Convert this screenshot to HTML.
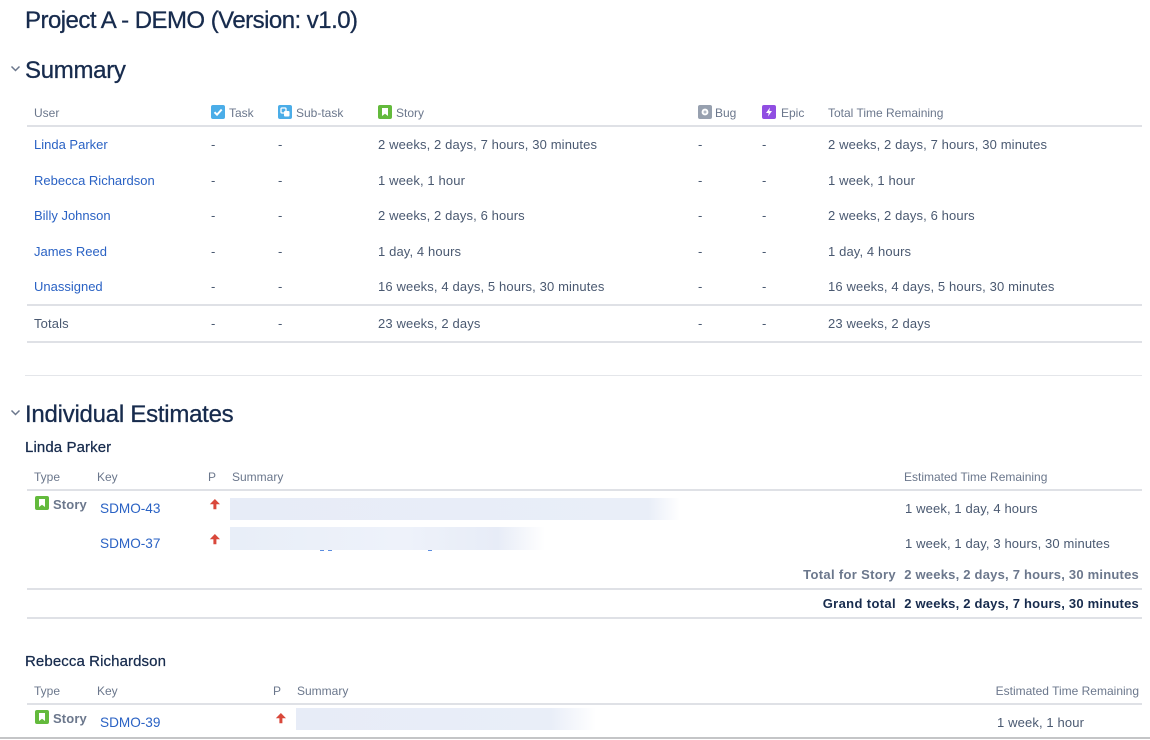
<!DOCTYPE html>
<html><head><meta charset="utf-8"><style>
html,body{margin:0;padding:0;background:#fff;width:1150px;height:740px;overflow:hidden}
body{position:relative;font-family:"Liberation Sans",sans-serif;font-size:13px;color:#4a5971}
.t{position:absolute;white-space:nowrap;line-height:16px;height:16px;letter-spacing:.125px}
.h{color:#6b778c;font-size:12px;font-weight:400;letter-spacing:0}
.a{color:#2a62c4;letter-spacing:0}
.k{color:#2a62c4;letter-spacing:0;font-size:13.6px}
.b{font-weight:700;letter-spacing:.22px}
.l{position:absolute;background:#dfe1e6}
svg{position:absolute}
.sum{position:absolute;height:22px;background:linear-gradient(90deg,#e7ecf7 0,#e9eef8 93%,#fff 100%)}
h1,h2,h3{position:absolute;margin:0;white-space:nowrap;color:#172b4d;font-weight:400;-webkit-text-stroke:.3px #172b4d}
h3{-webkit-text-stroke:.25px #172b4d;letter-spacing:.1px}
.f{position:absolute;top:550px;width:4px;height:1px;background:#5b8de0}
</style></head><body>
<h1 style="left:25px;top:7px;font-size:24px;line-height:28px;letter-spacing:-.53px">Project A - DEMO (Version: v1.0)</h1>
<svg style="left:10px;top:64px" width="12" height="10"><path d="M1.5 2.5 5.5 6.5 9.5 2.5" fill="none" stroke="#6b778c" stroke-width="1.5"/></svg>
<h2 style="left:25px;top:57px;font-size:24px;line-height:28px;letter-spacing:-.3px">Summary</h2>

<span class="t h" style="left:34px;top:105px">User</span>
<svg style="left:211px;top:105px" width="14" height="14"><rect width="14" height="14" rx="2" fill="#4bade8"/><path d="M3.5 7.2 6 9.7 10.7 4.5" fill="none" stroke="#fff" stroke-width="2"/></svg>
<span class="t h" style="left:229px;top:105px">Task</span>
<svg style="left:278px;top:105px" width="14" height="14"><rect width="14" height="14" rx="2" fill="#4bade8"/><rect x="3" y="3" width="5" height="5" rx="1" fill="none" stroke="#fff" stroke-width="1.3"/><rect x="6" y="6" width="5.5" height="5.5" rx="1" fill="#fff"/></svg>
<span class="t h" style="left:296px;top:105px">Sub-task</span>
<svg style="left:378px;top:105px" width="14" height="14"><rect width="14" height="14" rx="2" fill="#63ba3c"/><path d="M4 3h6v8L7 8.7 4 11z" fill="#fff"/></svg>
<span class="t h" style="left:396px;top:105px">Story</span>
<svg style="left:698px;top:105px" width="14" height="14"><rect width="14" height="14" rx="2" fill="#97a0af"/><circle cx="7" cy="7" r="3.4" fill="#fff"/><circle cx="7" cy="7" r="1.5" fill="#b3bac5"/></svg>
<span class="t h" style="left:715px;top:105px">Bug</span>
<svg style="left:762px;top:105px" width="14" height="14"><rect width="14" height="14" rx="2" fill="#904ee2"/><path d="M8 2.5 4 8h2.7L6 11.5 10 6H7.3z" fill="#fff"/></svg>
<span class="t h" style="left:781px;top:105px">Epic</span>
<span class="t h" style="left:828px;top:105px">Total Time Remaining</span>
<div class="l" style="left:27px;top:125px;width:1115px;height:2px"></div>

<span class="t a" style="left:34px;top:137px">Linda Parker</span><span class="t" style="left:211px;top:137px">-</span><span class="t" style="left:278px;top:137px">-</span><span class="t" style="left:378px;top:137px">2 weeks, 2 days, 7 hours, 30 minutes</span><span class="t" style="left:698px;top:137px">-</span><span class="t" style="left:762px;top:137px">-</span><span class="t" style="left:828px;top:137px">2 weeks, 2 days, 7 hours, 30 minutes</span>
<span class="t a" style="left:34px;top:173px">Rebecca Richardson</span><span class="t" style="left:211px;top:173px">-</span><span class="t" style="left:278px;top:173px">-</span><span class="t" style="left:378px;top:173px">1 week, 1 hour</span><span class="t" style="left:698px;top:173px">-</span><span class="t" style="left:762px;top:173px">-</span><span class="t" style="left:828px;top:173px">1 week, 1 hour</span>
<span class="t a" style="left:34px;top:208px">Billy Johnson</span><span class="t" style="left:211px;top:208px">-</span><span class="t" style="left:278px;top:208px">-</span><span class="t" style="left:378px;top:208px">2 weeks, 2 days, 6 hours</span><span class="t" style="left:698px;top:208px">-</span><span class="t" style="left:762px;top:208px">-</span><span class="t" style="left:828px;top:208px">2 weeks, 2 days, 6 hours</span>
<span class="t a" style="left:34px;top:244px">James Reed</span><span class="t" style="left:211px;top:244px">-</span><span class="t" style="left:278px;top:244px">-</span><span class="t" style="left:378px;top:244px">1 day, 4 hours</span><span class="t" style="left:698px;top:244px">-</span><span class="t" style="left:762px;top:244px">-</span><span class="t" style="left:828px;top:244px">1 day, 4 hours</span>
<span class="t a" style="left:34px;top:279px">Unassigned</span><span class="t" style="left:211px;top:279px">-</span><span class="t" style="left:278px;top:279px">-</span><span class="t" style="left:378px;top:279px">16 weeks, 4 days, 5 hours, 30 minutes</span><span class="t" style="left:698px;top:279px">-</span><span class="t" style="left:762px;top:279px">-</span><span class="t" style="left:828px;top:279px">16 weeks, 4 days, 5 hours, 30 minutes</span>
<div class="l" style="left:27px;top:304px;width:1115px;height:2px"></div>
<span class="t" style="left:34px;top:316px">Totals</span><span class="t" style="left:211px;top:316px">-</span><span class="t" style="left:278px;top:316px">-</span><span class="t" style="left:378px;top:316px">23 weeks, 2 days</span><span class="t" style="left:698px;top:316px">-</span><span class="t" style="left:762px;top:316px">-</span><span class="t" style="left:828px;top:316px">23 weeks, 2 days</span>
<div class="l" style="left:27px;top:341px;width:1115px;height:2px"></div>
<div class="l" style="left:25px;top:375px;width:1117px;height:1px;background:#e4e6ea"></div>

<svg style="left:10px;top:408px" width="12" height="10"><path d="M1.5 2.5 5.5 6.5 9.5 2.5" fill="none" stroke="#6b778c" stroke-width="1.5"/></svg>
<h2 style="left:25px;top:401px;font-size:24px;line-height:28px;letter-spacing:-.25px">Individual Estimates</h2>
<h3 style="left:25px;top:439px;font-size:15px;line-height:18px">Linda Parker</h3>

<span class="t h" style="left:34px;top:469px">Type</span><span class="t h" style="left:97px;top:469px">Key</span><span class="t h" style="left:208px;top:469px">P</span><span class="t h" style="left:232px;top:469px">Summary</span><span class="t h" style="left:904px;top:469px">Estimated Time Remaining</span>
<div class="l" style="left:27px;top:489px;width:1115px;height:2px"></div>
<svg style="left:35px;top:496px" width="14" height="14"><rect width="14" height="14" rx="2" fill="#63ba3c"/><path d="M4 3h6v8L7 8.7 4 11z" fill="#fff"/></svg>
<span class="t" style="left:53px;top:497px;font-weight:700;color:#6b778c">Story</span>
<span class="t k" style="left:100px;top:501px">SDMO-43</span>
<svg style="left:209px;top:498px" width="12" height="12"><path d="M5.9 1 .8 6.2h3.6V11.3h3V6.2H11z" fill="#d9483b"/></svg>
<div class="sum" style="left:230px;top:498px;width:450px"></div>
<span class="t" style="left:905px;top:501px">1 week, 1 day, 4 hours</span>
<span class="t k" style="left:100px;top:536px">SDMO-37</span>
<svg style="left:209px;top:533px" width="12" height="12"><path d="M5.9 1 .8 6.2h3.6V11.3h3V6.2H11z" fill="#d9483b"/></svg>
<div class="sum" style="left:230px;top:527px;width:315px;height:23px;background:linear-gradient(90deg,#e8eef8 0,#eef2fa 55%,#e7ecf7 85%,#fff 100%)"></div>
<i class="f" style="left:320px"></i><i class="f" style="left:328px"></i><i class="f" style="left:428px"></i>
<span class="t" style="left:905px;top:536px">1 week, 1 day, 3 hours, 30 minutes</span>
<span class="t b" style="right:254px;top:567px;color:#6b778c;letter-spacing:.33px">Total for Story</span>
<span class="t b" style="right:11px;top:567px;color:#6b778c">2 weeks, 2 days, 7 hours, 30 minutes</span>
<div class="l" style="left:27px;top:588px;width:1115px;height:2px"></div>
<span class="t b" style="right:254px;top:596px;color:#172b4d;letter-spacing:.36px">Grand total</span>
<span class="t b" style="right:11px;top:596px;color:#172b4d">2 weeks, 2 days, 7 hours, 30 minutes</span>
<div class="l" style="left:27px;top:617px;width:1115px;height:2px"></div>

<h3 style="left:25px;top:653px;font-size:15px;line-height:18px">Rebecca Richardson</h3>
<span class="t h" style="left:34px;top:683px">Type</span><span class="t h" style="left:97px;top:683px">Key</span><span class="t h" style="left:273px;top:683px">P</span><span class="t h" style="left:297px;top:683px">Summary</span><span class="t h" style="right:11px;top:683px">Estimated Time Remaining</span>
<div class="l" style="left:27px;top:703px;width:1115px;height:2px"></div>
<svg style="left:35px;top:710px" width="14" height="14"><rect width="14" height="14" rx="2" fill="#63ba3c"/><path d="M4 3h6v8L7 8.7 4 11z" fill="#fff"/></svg>
<span class="t" style="left:53px;top:711px;font-weight:700;color:#6b778c">Story</span>
<span class="t k" style="left:100px;top:715px">SDMO-39</span>
<svg style="left:275px;top:712px" width="12" height="12"><path d="M5.9 1 .8 6.2h3.6V11.3h3V6.2H11z" fill="#d9483b"/></svg>
<div class="sum" style="left:296px;top:708px;width:300px;background:linear-gradient(90deg,#e7ecf7 0,#e9eef8 85%,#fff 100%)"></div>
<span class="t" style="left:997px;top:715px">1 week, 1 hour</span>
<div class="l" style="left:0;top:737px;width:1150px;height:2px;background:#c4c5c7"></div>
</body></html>
